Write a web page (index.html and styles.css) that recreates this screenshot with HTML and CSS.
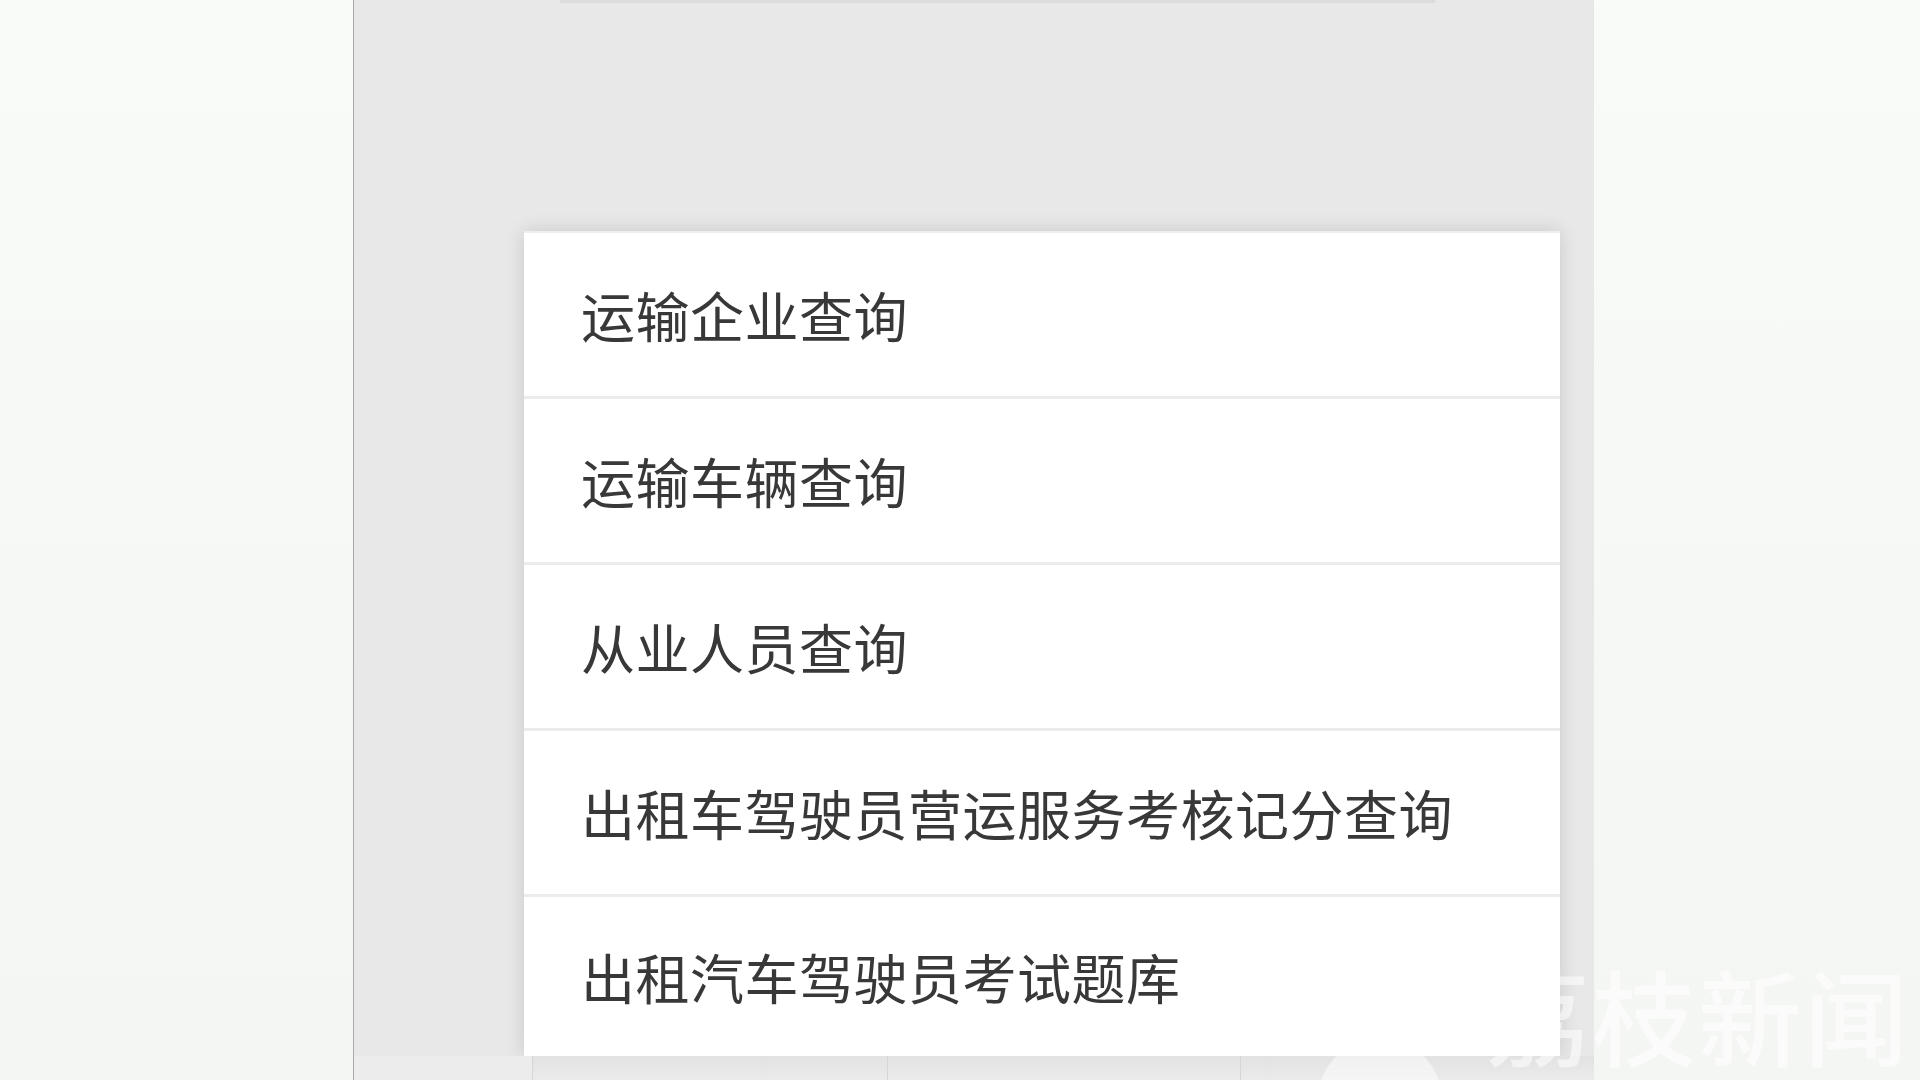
FILE: index.html
```html
<!DOCTYPE html>
<html lang="zh-CN">
<head>
    <meta charset="UTF-8">
    <meta name="viewport" content="width=device-width, initial-scale=1.0">
    <title>运输查询</title>
    <link rel="stylesheet" href="styles.css">
</head>
<body>
    <div class="page">
        <div class="side side-left"></div>
        <div class="screen">
            <div class="search-edge"></div>
            <ul class="menu">
                <li class="menu-item">运输企业查询</li>
                <li class="menu-item">运输车辆查询</li>
                <li class="menu-item">从业人员查询</li>
                <li class="menu-item">出租车驾驶员营运服务考核记分查询</li>
                <li class="menu-item">出租汽车驾驶员考试题库</li>
            </ul>
            <div class="tiles">
                <div class="tile tile-first"></div>
                <div class="tile"></div>
                <div class="tile"></div>
                <div class="tile"></div>
            </div>
        </div>
        <div class="side side-right"></div>

        <div class="watermark">
            <span class="watermark-logo"></span>
            <span class="watermark-text">荔枝新闻</span>
        </div>
    </div>
</body>
</html>
```

FILE: styles.css
```css
body {
    margin: 0;
    font-family: "Noto Sans CJK SC", "Noto Sans", sans-serif;
    background-color: #f6f8f6;
    overflow: hidden;
}
.page {
    position: relative;
    display: flex;
    width: 1920px;
    height: 1080px;
    overflow: hidden;
}
.side {
    flex: none;
}
.side-left {
    width: 353px;
    background: linear-gradient(to bottom, #f9fbf9, #f4f6f4);
    border-right: 1px solid #a9a9a9;
}
.side-right {
    flex: 1;
    background: linear-gradient(to bottom, #f9fbf9, #f4f6f3);
}
.screen {
    width: 1240px;
    flex: none;
    background-color: #e8e8e8;
    display: flex;
    flex-direction: column;
}
.search-edge {
    height: 3px;
    width: 875px;
    margin-left: 206px;
    background-color: #dcdcdc;
}
.menu {
    list-style: none;
    margin: 228px 34px 0 170px;
    padding: 0;
    background: white;
    box-shadow: 0 0 18px rgba(0, 0, 0, 0.14);
    border-top: 2px solid #eeeeee;
}
.menu-item {
    height: 166px;
    display: flex;
    align-items: center;
    padding-left: 57px;
    box-sizing: border-box;
    font-size: 54px;
    letter-spacing: 0.5px;
    color: #383838;
    border-bottom: 3px solid #ececec;
}
.menu-item:last-child {
    border-bottom: none;
    height: 159px;
}
.tiles {
    flex: 1;
    display: grid;
    grid-template-columns: 178px 355px 353px 354px;
}
.tile {
    background: linear-gradient(to bottom, #e2e2e2, #ebebeb);
    border-left: 1px solid #d6d6d6;
}
.tile-first {
    border-left: none;
    background: #ececec;
}
.watermark {
    position: absolute;
    right: 10px;
    bottom: 14px;
    display: flex;
    align-items: flex-end;
    gap: 44px;
}
.watermark-logo {
    width: 124px;
    height: 124px;
    margin-bottom: -96px;
    border-radius: 50%;
    background: rgba(255, 255, 255, 0.5);
}
.watermark-text {
    font-size: 104px;
    line-height: 1;
    font-weight: 500;
    color: rgba(255, 255, 255, 0.55);
    letter-spacing: 2px;
}
```
